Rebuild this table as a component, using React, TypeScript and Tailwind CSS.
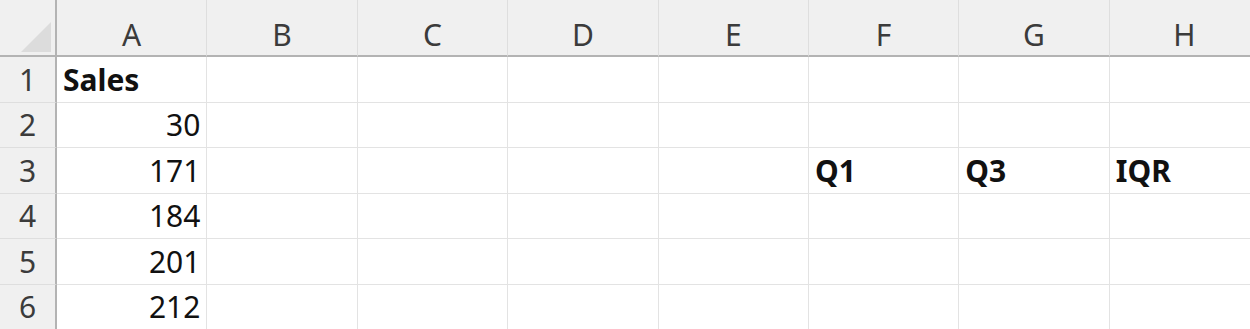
import React from "react";

const cols = ["A", "B", "C", "D", "E", "F", "G", "H"];

type Cell = { text: string; bold?: boolean; right?: boolean };

const data: Record<string, Cell> = {
  "1-A": { text: "Sales", bold: true },
  "2-A": { text: "30", right: true },
  "3-A": { text: "171", right: true },
  "4-A": { text: "184", right: true },
  "5-A": { text: "201", right: true },
  "6-A": { text: "212", right: true },
  "3-F": { text: "Q1", bold: true },
  "3-G": { text: "Q3", bold: true },
  "3-H": { text: "IQR", bold: true },
};

export default function App() {
  const rows = [1, 2, 3, 4, 5, 6];
  return (
    <div
      className="w-[1250px] h-[329px] overflow-hidden bg-white tabular-nums"
      style={{ fontFamily: '"Noto Sans", "Open Sans", sans-serif' }}
    >
      <div className="grid grid-cols-[57px_repeat(8,150.4px)] grid-rows-[57px_repeat(6,45.5px)]">
        {/* corner */}
        <div className="relative bg-[#f0f0f0] border-r-2 border-b-2 border-r-[#b3b3b3] border-b-[#b3b3b3]">
          <svg className="absolute right-[4px] bottom-[3px]" width="30" height="30" viewBox="0 0 30 30">
            <polygon points="30,0 30,30 0,30" fill="#dcdcdc" />
          </svg>
        </div>
        {cols.map((c) => (
          <div
            key={c}
            className="flex items-end justify-center pb-[5px] bg-[#f0f0f0] border-r border-r-[#dedede] border-b-2 border-b-[#b3b3b3] text-[30px] text-[#3b3b3b] leading-none"
          >
            <span>{c}</span>
          </div>
        ))}
        {rows.map((r) => (
          <React.Fragment key={r}>
            <div className="flex items-end justify-center pb-[7px] bg-[#f0f0f0] border-r-2 border-r-[#b3b3b3] border-b border-b-[#dedede] text-[30px] text-[#3b3b3b] leading-none">
              {r}
            </div>
            {cols.map((c) => {
              const cell = data[`${r}-${c}`];
              return (
                <div
                  key={c}
                  className={`flex items-end pb-[7px] px-[6px] border-r border-b border-[#e3e3e3] text-[30px] text-[#111] leading-none whitespace-nowrap ${
                    cell?.right ? "justify-end" : "justify-start"
                  } ${cell?.bold ? "font-bold" : "font-normal"}`}
                >
                  {cell?.text ?? ""}
                </div>
              );
            })}
          </React.Fragment>
        ))}
      </div>
    </div>
  );
}
